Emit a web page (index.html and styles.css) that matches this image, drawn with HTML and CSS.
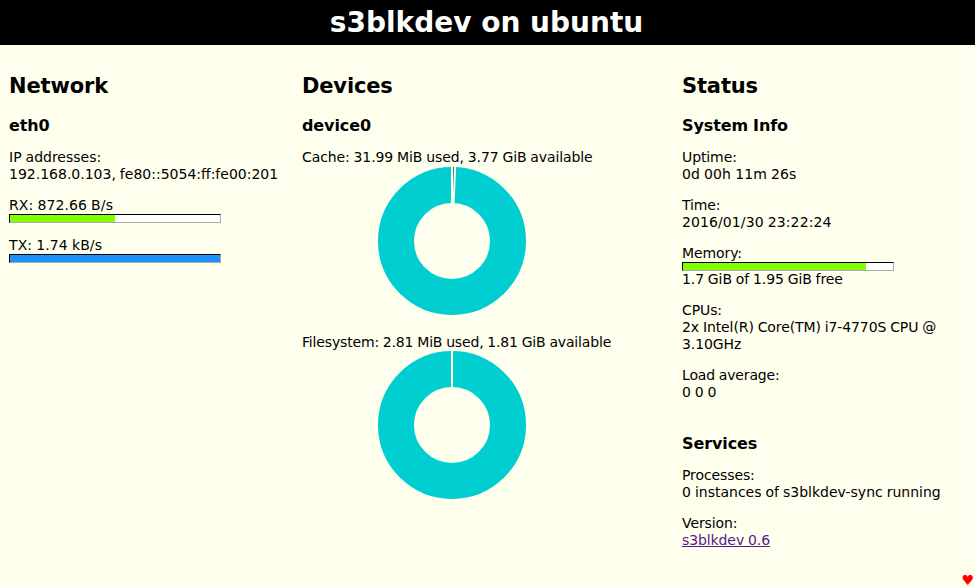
FILE: index.html
```html
<!DOCTYPE html>
<html lang="en">
<head>
    <meta charset="UTF-8">
    <title>s3blkdev on ubuntu</title>
    <link rel="stylesheet" href="styles.css">
</head>
<body>
    <header>
        <h1>s3blkdev on ubuntu</h1>
    </header>

    <main class="columns">
        <section class="col col-network">
            <h2>Network</h2>
            <h3>eth0</h3>
            <p><span class="plain">IP addresses:</span><br><span class="plain">192.168.0.103, fe80::5054:ff:fe00:201</span></p>
            <div class="stat">
                <span class="wide">RX: 872.66 B/s</span>
                <div class="bar"><div class="bar-fill green" style="width: 50%"></div></div>
            </div>
            <div class="stat">
                <span class="wide">TX: 1.74 kB/s</span>
                <div class="bar"><div class="bar-fill blue" style="width: 100%"></div></div>
            </div>
        </section>

        <section class="col col-devices">
            <h2>Devices</h2>
            <h3>device0</h3>
            <p class="chart-label">Cache: 31.99 MiB used, 3.77 GiB available</p>
            <svg class="donut" width="150" height="150" viewBox="0 0 150 150">
                <circle class="ring" cx="75" cy="75" r="56"/>
                <polygon class="used" points="75,1 78.1,1 76.6,37 75,37"/>
                <line class="slice-edge" x1="75" y1="0" x2="75" y2="38"/>
                <line class="slice-edge" x1="78.1" y1="0" x2="76.6" y2="38"/>
            </svg>
            <p class="chart-label tighter">Filesystem: 2.81 MiB used, 1.81 GiB available</p>
            <svg class="donut donut-fs" width="150" height="150" viewBox="0 0 150 150">
                <circle class="ring" cx="75" cy="75" r="56"/>
                <line class="slice-edge" x1="75" y1="0" x2="75" y2="38"/>
            </svg>
        </section>

        <section class="col col-status">
            <h2>Status</h2>
            <h3>System Info</h3>
            <p>Uptime:<br><span class="wide">0d 00h 11m 26s</span></p>
            <p>Time:<br><span class="wide">2016/01/30 23:22:24</span></p>
            <div class="stat">
                Memory:
                <div class="bar"><div class="bar-fill green" style="width: 87%"></div></div>
                1.7 GiB of 1.95 GiB free
            </div>
            <p>CPUs:<br>2x Intel(R) Core(TM) i7-4770S CPU @ 3.10GHz</p>
            <p><span class="tighter">Load average:</span><br>0 0 0</p>
            <h3 class="services">Services</h3>
            <p>Processes:<br><span class="plain">0 instances of s3blkdev-sync running</span></p>
            <p>Version:<br><a href="#">s3blkdev 0.6</a></p>
        </section>
    </main>

    <span class="heart">&#9829;</span>
</body>
</html>
```

FILE: styles.css
```css
body {
    margin: 0;
    height: 587px;
    overflow: hidden;
    position: relative;
    background: #ffffee;
    color: #000;
    font-family: "DejaVu Sans", sans-serif;
    font-size: 14px;
    line-height: 17px;
    letter-spacing: -0.1px;
    word-spacing: -0.45px;
}

header {
    background: #000;
    color: #fff;
    height: 45px;
    padding-right: 2px;
    text-align: center;
}

h1 {
    margin: 0;
    font-size: 28px;
    line-height: 45px;
    letter-spacing: 0;
    word-spacing: 0;
}

.columns {
    display: grid;
    grid-template-columns: 293px 380px 284px;
    padding: 0 9px;
}

h2 {
    margin: 28px 0 0;
    font-size: 21px;
    line-height: 26px;
    letter-spacing: -0.15px;
}

h3 {
    margin: 17px 0 0;
    font-size: 16px;
    line-height: 19px;
    letter-spacing: -0.1px;
}

p {
    margin: 14px 0 0;
}

.stat {
    margin-top: 14px;
}

/* the line widths differ a little from one run of text to the next */
.plain {
    letter-spacing: 0;
}

.wide {
    letter-spacing: 0.1px;
}

.tighter {
    letter-spacing: -0.16px;
}

.bar {
    box-sizing: border-box;
    width: 212px;
    height: 9px;
    background: #fff;
    border: 1px solid;
    border-color: #000 #aaa #aaa #000;
}

.bar-fill {
    height: 100%;
}

.green {
    background: #7fff00;
}

.blue {
    background: #1e90ff;
}

.chart-label {
    white-space: nowrap;
}

.donut {
    display: block;
    margin-left: 75px;
}

.donut-fs {
    margin-top: -1px;
}

.donut + .chart-label {
    margin-top: 18px;
}

.ring {
    fill: none;
    stroke: #00ced1;
    stroke-width: 36;
}

.used {
    fill: #1b6f88;
}

.slice-edge {
    stroke: #ffffee;
    stroke-width: 2;
}

.services {
    margin-top: 33px;
}

a {
    color: #551a8b;
}

.heart {
    position: absolute;
    right: 1px;
    bottom: 0;
    color: #f00;
    font-size: 14px;
    line-height: 14px;
}
```
